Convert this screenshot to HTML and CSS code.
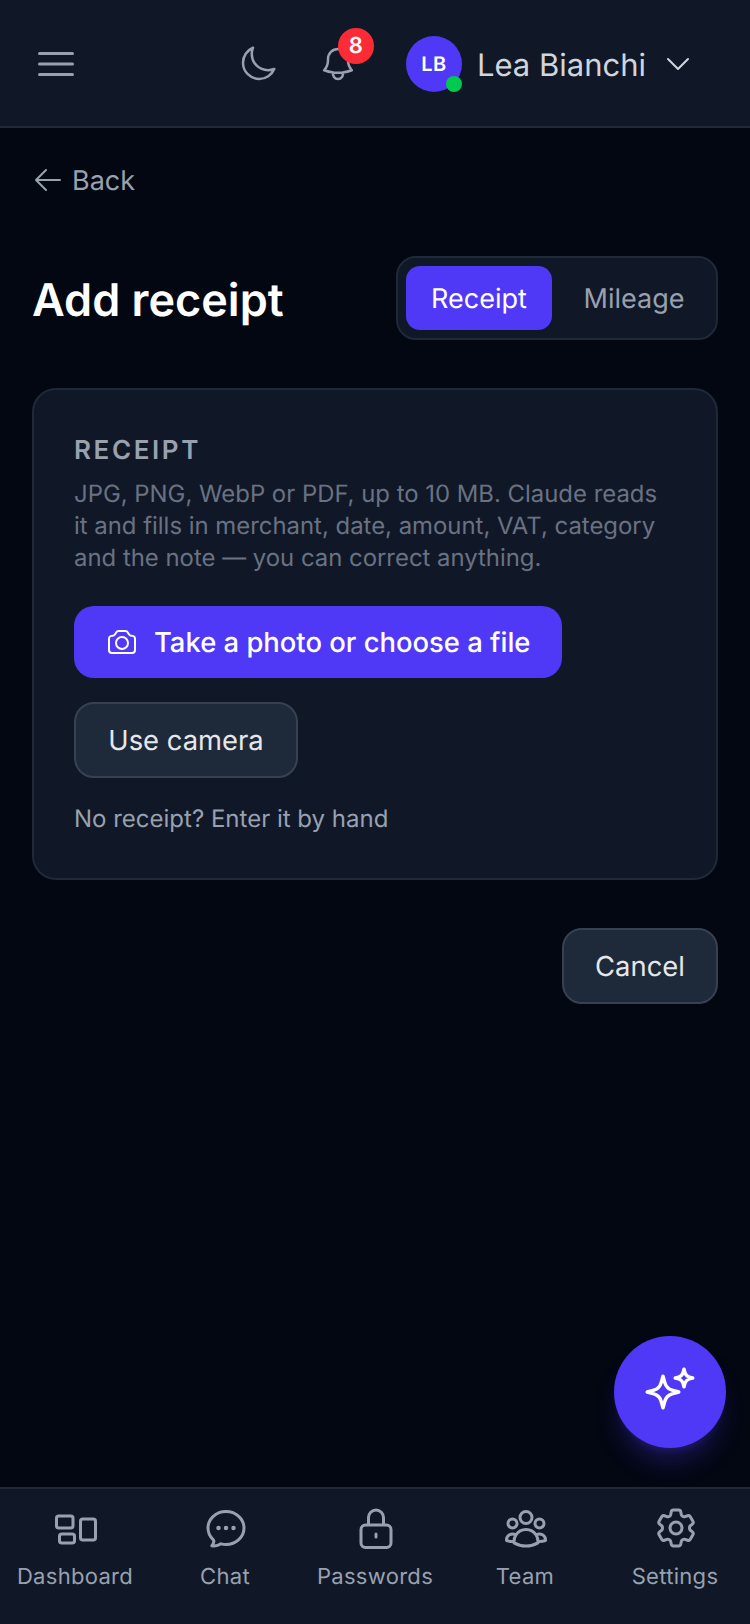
FILE: index.html
```html
<!DOCTYPE html>
<html lang="en">
<head>
<meta charset="utf-8">
<title>Add receipt</title>
<link rel="stylesheet" href="styles.css">
</head>
<body>
<div class="app">
  <header class="topbar">
    <button class="icon-btn menu" aria-label="Menu">
      <svg class="ico" width="48" height="48" viewBox="0 0 24 24"><path d="M3.75 6.75h16.5M3.75 12h16.5m-16.5 5.25h16.5"/></svg>
    </button>
    <div class="top-right">
      <svg class="ico moon" width="40" height="40" viewBox="0 0 24 24"><path d="M21.752 15.002A9.72 9.72 0 0 1 18 15.75c-5.385 0-9.75-4.365-9.75-9.75 0-1.33.266-2.597.748-3.752A9.753 9.753 0 0 0 3 11.25C3 16.635 7.365 21 12.75 21a9.753 9.753 0 0 0 9.002-5.998Z"/></svg>
      <div class="bell">
        <svg class="ico" width="40" height="40" viewBox="0 0 24 24"><path d="M14.857 17.082a23.848 23.848 0 0 0 5.454-1.31A8.967 8.967 0 0 1 18 9.75V9A6 6 0 0 0 6 9v.75a8.967 8.967 0 0 1-2.312 6.022c1.733.64 3.56 1.085 5.455 1.31m5.714 0a24.255 24.255 0 0 1-5.714 0m5.714 0a3 3 0 1 1-5.714 0"/></svg>
        <span class="badge">8</span>
      </div>
      <div class="user">
        <div class="avatar">LB<span class="dot"></span></div>
        <span class="name">Lea Bianchi</span>
        <svg class="ico light" width="32" height="32" viewBox="0 0 24 24"><path d="m19.5 8.25-7.5 7.5-7.5-7.5"/></svg>
      </div>
    </div>
  </header>

  <main class="content">
    <a class="back">
      <svg class="ico" width="32" height="32" viewBox="0 0 24 24"><path d="M10.5 19.5 3 12m0 0 7.5-7.5M3 12h18"/></svg>
      <span>Back</span>
    </a>
    <div class="title-row">
      <h1>Add receipt</h1>
      <div class="tabs">
        <div class="tab active">Receipt</div>
        <div class="tab">Mileage</div>
      </div>
    </div>
    <section class="card">
      <div class="label">RECEIPT</div>
      <p class="help">JPG, PNG, WebP or PDF, up to 10 MB. Claude reads it and fills in merchant, date, amount, VAT, category and the note — you can correct anything.</p>
      <div class="btn btn-primary">
        <svg class="ico white" width="32" height="32" viewBox="0 0 24 24"><path d="M6.827 6.175A2.31 2.31 0 0 1 5.186 7.23c-.38.054-.757.112-1.134.175C2.999 7.58 2.25 8.507 2.25 9.574V18a2.25 2.25 0 0 0 2.25 2.25h15A2.25 2.25 0 0 0 21.75 18V9.574c0-1.067-.75-1.994-1.802-2.169a47.865 47.865 0 0 0-1.134-.175 2.31 2.31 0 0 1-1.64-1.055l-.822-1.316a2.192 2.192 0 0 0-1.736-1.039 48.774 48.774 0 0 0-5.232 0 2.192 2.192 0 0 0-1.736 1.039l-.821 1.316Z"/><path d="M16.5 12.75a4.5 4.500 0 1 1-9 0 4.5 4.500 0 0 1 9 0Z"/></svg>
        <span>Take a photo or choose a file</span>
      </div>
      <div class="btn btn-secondary">Use camera</div>
      <div class="by-hand">No receipt? Enter it by hand</div>
    </section>
    <div class="actions">
      <div class="btn btn-secondary cancel">Cancel</div>
    </div>
  </main>

  <button class="fab" aria-label="Assistant">
    <svg class="ico white" width="56" height="56" viewBox="0 0 24 24"><path d="M9.813 15.904 9 18.75l-.813-2.846a4.5 4.5 0 0 0-3.09-3.09L2.25 12l2.846-.813a4.5 4.5 0 0 0 3.09-3.09L9 5.25l.813 2.846a4.5 4.5 0 0 0 3.09 3.09L15.75 12l-2.846.813a4.5 4.5 0 0 0-3.09 3.09Z"/><path d="M18.259 8.715 18 9.75l-.259-1.035a3.375 3.375 0 0 0-2.455-2.456L14.25 6l1.036-.259a3.375 3.375 0 0 0 2.455-2.456L18 2.25l.259 1.035a3.375 3.375 0 0 0 2.456 2.456L21.75 6l-1.035.259a3.375 3.375 0 0 0-2.456 2.456Z"/></svg>
  </button>

  <nav class="tabbar">
    <div class="nav-item">
      <svg class="ico" width="48" height="48" viewBox="0 0 24 24"><path d="M2.25 7.125C2.25 6.504 2.754 6 3.375 6h6c.621 0 1.125.504 1.125 1.125v3.75c0 .621-.504 1.125-1.125 1.125h-6a1.125 1.125 0 0 1-1.125-1.125v-3.75ZM14.25 8.625c0-.621.504-1.125 1.125-1.125h5.25c.621 0 1.125.504 1.125 1.125v8.25c0 .621-.504 1.125-1.125 1.125h-5.25a1.125 1.125 0 0 1-1.125-1.125v-8.25ZM3.75 16.125c0-.621.504-1.125 1.125-1.125h5.25c.621 0 1.125.504 1.125 1.125v2.25c0 .621-.504 1.125-1.125 1.125h-5.25a1.125 1.125 0 0 1-1.125-1.125v-2.25Z"/></svg>
      <span>Dashboard</span>
    </div>
    <div class="nav-item">
      <svg class="ico" width="48" height="48" viewBox="0 0 24 24"><path d="M8.625 12a.375.375 0 1 1-.75 0 .375.375 0 0 1 .75 0Zm0 0H8.25m4.125 0a.375.375 0 1 1-.75 0 .375.375 0 0 1 .75 0Zm0 0H12m4.125 0a.375.375 0 1 1-.75 0 .375.375 0 0 1 .75 0Zm0 0h-.375M21 12c0 4.556-4.03 8.25-9 8.25a9.764 9.764 0 0 1-2.555-.337A5.972 5.972 0 0 1 5.41 20.97a5.969 5.969 0 0 1-.474-.065 4.48 4.48 0 0 0 .978-2.025c.09-.457-.133-.901-.467-1.226C3.93 16.178 3 14.189 3 12c0-4.556 4.03-8.25 9-8.25s9 3.694 9 8.25Z"/></svg>
      <span>Chat</span>
    </div>
    <div class="nav-item">
      <svg class="ico" width="48" height="48" viewBox="0 0 24 24"><path d="M15.75 10.5V6.75a3.75 3.75 0 1 0-7.5 0v3.75m-1.500 11.250h10.500a2.250 2.250 0 0 0 2.250-2.250v-6.750a2.250 2.250 0 0 0-2.250-2.250H6.750a2.250 2.250 0 0 0-2.250 2.250v6.750a2.250 2.250 0 0 0 2.250 2.250Z"/><path d="M12 15v1.500"/></svg>
      <span>Passwords</span>
    </div>
    <div class="nav-item">
      <svg class="ico" width="48" height="48" viewBox="0 0 24 24"><path d="M18 18.72a9.094 9.094 0 0 0 3.741-.479 3 3 0 0 0-4.682-2.72m.94 3.198.001.031c0 .225-.012.447-.037.666A11.944 11.944 0 0 1 12 21c-2.17 0-4.207-.576-5.963-1.584A6.062 6.062 0 0 1 6 18.719m12 0a5.971 5.971 0 0 0-.941-3.197m0 0A5.995 5.995 0 0 0 12 12.75a5.995 5.995 0 0 0-5.058 2.772m0 0a3 3 0 0 0-4.681 2.72 8.986 8.986 0 0 0 3.74.477m.94-3.197a5.971 5.971 0 0 0-.94 3.197M15 6.75a3 3 0 1 1-6 0 3 3 0 0 1 6 0Zm6 3a2.25 2.25 0 1 1-4.5 0 2.25 2.25 0 0 1 4.5 0Zm-13.5 0a2.25 2.25 0 1 1-4.5 0 2.25 2.25 0 0 1 4.5 0Z"/></svg>
      <span>Team</span>
    </div>
    <div class="nav-item">
      <svg class="ico" width="48" height="48" viewBox="0 0 24 24"><path d="M9.594 3.94c.09-.542.56-.94 1.11-.94h2.593c.55 0 1.02.398 1.11.94l.213 1.281c.063.374.313.686.645.87.074.04.147.083.22.127.325.196.72.257 1.075.124l1.217-.456a1.125 1.125 0 0 1 1.37.49l1.296 2.247a1.125 1.125 0 0 1-.26 1.431l-1.003.827c-.293.241-.438.613-.43.992a7.723 7.723 0 0 1 0 .255c-.008.378.137.75.43.991l1.004.827c.424.35.534.955.26 1.43l-1.298 2.247a1.125 1.125 0 0 1-1.369.491l-1.217-.456c-.355-.133-.75-.072-1.076.124a6.47 6.47 0 0 1-.22.128c-.331.183-.581.495-.644.869l-.213 1.281c-.09.543-.56.94-1.11.94h-2.594c-.55 0-1.019-.398-1.11-.94l-.213-1.281c-.062-.374-.312-.686-.644-.87a6.52 6.52 0 0 1-.22-.127c-.325-.196-.72-.257-1.076-.124l-1.217.456a1.125 1.125 0 0 1-1.369-.49l-1.297-2.247a1.125 1.125 0 0 1 .26-1.431l1.004-.827c.292-.24.437-.613.43-.991a6.932 6.932 0 0 1 0-.255c.007-.38-.138-.751-.43-.992l-1.004-.827a1.125 1.125 0 0 1-.26-1.43l1.297-2.247a1.125 1.125 0 0 1 1.37-.491l1.216.456c.356.133.751.072 1.076-.124.072-.044.146-.086.22-.128.332-.183.582-.495.644-.869l.214-1.28Z"/><path d="M15 12a3 3 0 1 1-6 0 3 3 0 0 1 6 0Z"/></svg>
      <span>Settings</span>
    </div>
  </nav>
</div>
</body>
</html>
```
FILE: styles.css
```css
* { box-sizing: border-box; }
html, body { margin: 0; padding: 0; }
body { font-family: Inter, "Liberation Sans", sans-serif; background: #030712; color: #e5e7eb; text-rendering: geometricPrecision; }
.app { position: relative; width: 750px; height: 1624px; display: flex; flex-direction: column; overflow: hidden; }
button { background: none; border: 0; padding: 0; font: inherit; }
svg { display: block; flex: none; }
.ico { fill: none; stroke: #99a1af; stroke-width: 1.5; stroke-linecap: round; stroke-linejoin: round; }
.ico.white { stroke: #fff; }
.ico.light { stroke: #d1d5dc; }

.topbar { height: 128px; flex: none; background: #101828; border-bottom: 2px solid #1e2939; display: flex; align-items: center; padding: 2px 56px 0 32px; justify-content: space-between; }
.top-right { display: flex; align-items: center; }
.moon { margin-right: 40px; }
.bell { position: relative; width: 40px; height: 40px; margin-right: 48px; }
.badge { position: absolute; left: 20px; top: -16px; width: 36px; height: 36px; border-radius: 50%; background: #fb2c36; color: #fff; font-size: 22px; font-weight: 600; display: flex; align-items: center; justify-content: center; }
.user { display: flex; align-items: center; }
.avatar { position: relative; width: 56px; height: 56px; border-radius: 50%; background: #4f39f6; color: #fff; font-size: 20px; font-weight: 600; display: flex; align-items: center; justify-content: center; letter-spacing: .5px; }
.dot { position: absolute; right: 0; bottom: 0; width: 16px; height: 16px; border-radius: 50%; background: #00c950; }
.name { font-size: 31px; color: #d1d5dc; margin: 2px 16px 0 15px; }

.content { flex: 1; padding: 0 32px; }
.back { display: flex; align-items: center; gap: 8px; color: #99a1af; font-size: 27px; height: 40px; margin-top: 32px; }
.title-row { display: flex; justify-content: space-between; align-items: center; margin-top: 56px; }
h1 { margin: 0; padding-top: 2px; font-size: 45px; font-weight: 600; color: #fff; }
.tabs { width: 322px; height: 84px; padding: 8px; background: #101828; border: 2px solid #1e2939; border-radius: 20px; display: flex; gap: 8px; }
.tab { flex: 1; display: flex; align-items: center; justify-content: center; font-size: 27px; color: #99a1af; border-radius: 14px; }
.tab.active { background: #4f39f6; color: #fff; flex: none; width: 146px; }

.card { margin-top: 48px; height: 492px; background: #101828; border: 2px solid #1e2939; border-radius: 24px; padding: 41px 40px 40px; }
.label { font-size: 26px; font-weight: 600; color: #99a1af; letter-spacing: 2.6px; line-height: 39px; }
.help { margin: 8px 0 0; max-width: 594px; font-size: 23.9px; line-height: 32px; color: #6a7282; }
.btn { display: inline-flex; align-items: center; justify-content: center; border-radius: 20px; font-size: 27.4px; }
.btn-primary { display: flex; justify-content: flex-start; width: 488px; height: 72px; margin-top: 32px; padding-left: 32px; background: #4f39f6; color: #fff; font-weight: 500; gap: 16px; }
.btn-secondary { height: 76px; background: #1e2939; border: 2px solid #364153; color: #e5e7eb; font-weight: 400; }
.card .btn-secondary { display: flex; width: 224px; margin-top: 24px; }
.by-hand { margin-top: 25px; font-size: 24px; line-height: 32px; color: #99a1af; }
.actions { display: flex; justify-content: flex-end; margin-top: 48px; }
.cancel { width: 156px; }

.fab { position: absolute; left: 614px; top: 1336px; width: 112px; height: 112px; border-radius: 50%; background: #4f39f6; display: flex; align-items: center; justify-content: center; box-shadow: 0 20px 25px -5px rgba(79,57,246,.25), 0 8px 10px -6px rgba(79,57,246,.25); }

.tabbar { height: 137px; flex: none; background: #101828; border-top: 2px solid #1e2939; display: flex; padding-top: 15px; }
.nav-item { flex: 1; display: flex; flex-direction: column; align-items: center; gap: 11px; color: #99a1af; font-size: 22px; letter-spacing: .3px; }
.nav-item svg { margin-left: 2px; }
.nav-item span { line-height: 28px; }
```
